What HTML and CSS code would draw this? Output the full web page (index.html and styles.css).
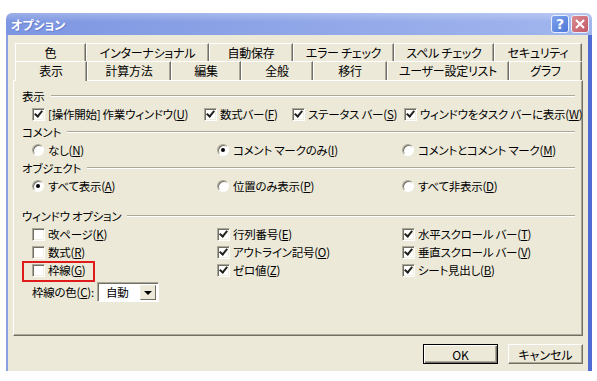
FILE: index.html
```html
<!DOCTYPE html>
<html lang="ja">
<head>
  <meta charset="UTF-8" />
  <title>オプション</title>
  <link rel="stylesheet" href="styles.css">
</head>
<body>
  <div class="dialog">
    <div class="titlebar">
      <span class="title">オプション</span>
      <div class="title-buttons">
        <span class="tbtn help">?</span>
        <span class="tbtn close">
          <svg width="10" height="10" viewBox="0 0 10 10"><path d="M1 1 L9 9 M9 1 L1 9" stroke="#fff" stroke-width="2" /></svg>
        </span>
      </div>
    </div>

    <div class="client">
      <div class="tabs">
        <div class="tab-row back">
          <div class="tab">色</div>
          <div class="tab">インターナショナル</div>
          <div class="tab">自動保存</div>
          <div class="tab">エラー チェック</div>
          <div class="tab">スペル チェック</div>
          <div class="tab">セキュリティ</div>
        </div>
        <div class="tab-row front">
          <div class="tab active">表示</div>
          <div class="tab">計算方法</div>
          <div class="tab">編集</div>
          <div class="tab">全般</div>
          <div class="tab">移行</div>
          <div class="tab">ユーザー設定リスト</div>
          <div class="tab">グラフ</div>
        </div>
      </div>

      <div class="panel">
        <div class="group-head first"><span>表示</span><i></i></div>
        <div class="row row-show">
          <label class="opt"><span class="box on"></span>[操作開始] 作業ウィンドウ(<u>U</u>)</label>
          <label class="opt"><span class="box on"></span>数式バー(<u>F</u>)</label>
          <label class="opt"><span class="box on"></span>ステータス バー(<u>S</u>)</label>
          <label class="opt"><span class="box on"></span>ウィンドウをタスク バーに表示(<u>W</u>)</label>
        </div>

        <div class="group-head"><span>コメント</span><i></i></div>
        <div class="row cols">
          <label class="opt"><span class="radio"></span>なし(<u>N</u>)</label>
          <label class="opt"><span class="radio on"></span>コメント マークのみ(<u>I</u>)</label>
          <label class="opt"><span class="radio"></span>コメントとコメント マーク(<u>M</u>)</label>
        </div>

        <div class="group-head"><span>オブジェクト</span><i></i></div>
        <div class="row cols">
          <label class="opt"><span class="radio on"></span>すべて表示(<u>A</u>)</label>
          <label class="opt"><span class="radio"></span>位置のみ表示(<u>P</u>)</label>
          <label class="opt"><span class="radio"></span>すべて非表示(<u>D</u>)</label>
        </div>

        <div class="group-head window"><span>ウィンドウ オプション</span><i></i></div>
        <div class="row cols">
          <label class="opt"><span class="box"></span>改ページ(<u>K</u>)</label>
          <label class="opt"><span class="box on"></span>行列番号(<u>E</u>)</label>
          <label class="opt"><span class="box on"></span>水平スクロール バー(<u>T</u>)</label>
        </div>
        <div class="row cols">
          <label class="opt"><span class="box"></span>数式(<u>R</u>)</label>
          <label class="opt"><span class="box on"></span>アウトライン記号(<u>O</u>)</label>
          <label class="opt"><span class="box on"></span>垂直スクロール バー(<u>V</u>)</label>
        </div>
        <div class="row cols">
          <label class="opt marked"><span class="box"></span>枠線(<u>G</u>)</label>
          <label class="opt"><span class="box on"></span>ゼロ値(<u>Z</u>)</label>
          <label class="opt"><span class="box on"></span>シート見出し(<u>B</u>)</label>
        </div>

        <div class="row color-row">
          <span>枠線の色(<u>C</u>):</span>
          <div class="select">
            <span class="select-value">自動</span>
            <span class="select-arrow"></span>
          </div>
        </div>
      </div>

      <div class="actions">
        <button class="btn default">OK</button>
        <button class="btn">キャンセル</button>
      </div>
    </div>
  </div>
</body>
</html>
```

FILE: styles.css
```css
:root {
  --face: #ece9d8;
  --light: #ffffff;
  --shadow: #aca899;
  --dark: #716f64;
  --frame: #8ba0e2;
  --frame-dark: #4f6cd4;
}

body {
  margin: 0;
  background: #fff;
  font-family: "Noto Sans CJK JP", sans-serif;
  font-feature-settings: "palt";
  font-size: 11.5px;
  letter-spacing: -0.25px;
  color: #000;
}

.dialog {
  margin: 13px 0 0 6px;
  width: 586px;
  height: 358px;
  display: flex;
  flex-direction: column;
}

/* title bar */
.titlebar {
  height: 22px;
  flex: none;
  display: flex;
  align-items: center;
  padding: 0 3px 0 5px;
  border-radius: 6px 6px 0 0;
  background:
    linear-gradient(to bottom, rgba(255,255,255,0.25), rgba(255,255,255,0) 40%),
    linear-gradient(to right, #7d96e1, #a2b6ee);
}

.title {
  color: #fff;
  font-weight: bold;
  font-size: 12px;
  letter-spacing: 0;
  text-shadow: 1px 1px 0 #6b82cf;
}

.title-buttons {
  margin-left: auto;
  display: flex;
  gap: 2px;
}

.tbtn {
  width: 18px;
  height: 18px;
  box-sizing: border-box;
  border: 1px solid #e8eefc;
  border-radius: 3px;
  display: flex;
  align-items: center;
  justify-content: center;
  color: #fff;
}

.help {
  background: linear-gradient(135deg, #7ea2ec, #4c78d8);
  font: bold 14px "DejaVu Sans", sans-serif;
}

.close {
  background: linear-gradient(135deg, #dc8a92, #c25a68);
}

/* window body */
.client {
  flex: 1;
  display: flex;
  flex-direction: column;
  background: var(--face);
  border-left: 2px solid var(--frame);
  border-right: 4px solid var(--frame-dark);
  padding: 8px 5px 7px 5px;
}

/* tabs */
.tabs {
  margin: 0 1px 0 2px;
}

.tab-row {
  display: grid;
  height: 18px;
}

.tab-row.back {
  grid-template-columns: 71px 123px 84px 101px 100px 88px;
}

.tab-row.front {
  grid-template-columns: 72px 84px 70px 72px 74px 122px 73px;
  height: 19px;
}

.tab {
  box-sizing: border-box;
  border-top: 1px solid var(--light);
  border-left: 1px solid var(--light);
  border-right: 1px solid var(--dark);
  box-shadow: inset -1px 0 0 var(--shadow);
  text-align: center;
  line-height: 17px;
  font-size: 12px;
  white-space: nowrap;
}

.tab.active {
  position: relative;
  z-index: 1;
  height: 20px;
  background: var(--face);
}

/* tab page */
.panel {
  height: 256px;
  box-sizing: border-box;
  flex: none;
  border: 1px solid;
  border-color: var(--light) var(--dark) var(--dark) var(--light);
  box-shadow: inset -1px -1px 0 var(--shadow);
  padding: 6px 8px 0 8px;
}

.group-head {
  display: flex;
  align-items: center;
  height: 18px;
}

.group-head.window {
  margin-top: 12px;
}

.group-head i {
  flex: 1;
  margin-left: 6px;
  margin-right: -1px;
  height: 1px;
  background: var(--shadow);
  border-bottom: 1px solid var(--light);
}

.row {
  height: 18px;
  padding-left: 10px;
  display: grid;
  align-items: center;
}

.row-show {
  grid-template-columns: 172px 88px 112px auto;
}

.cols {
  grid-template-columns: 185px 185px auto;
}

.opt {
  display: flex;
  align-items: center;
  white-space: nowrap;
  position: relative;
}

.box {
  width: 13px;
  height: 13px;
  box-sizing: border-box;
  margin-right: 3px;
  flex: none;
  position: relative;
  background: #fff;
  border: 1px solid;
  border-color: var(--shadow) var(--light) var(--light) var(--shadow);
  box-shadow: inset 1px 1px 0 var(--dark), inset -1px -1px 0 #f1efe2;
}

.box.on::after {
  content: "";
  position: absolute;
  left: 3px;
  top: 0px;
  width: 3px;
  height: 6px;
  border-right: 2px solid #21211c;
  border-bottom: 2px solid #21211c;
  transform: rotate(40deg);
}

.radio {
  width: 12px;
  height: 12px;
  box-sizing: border-box;
  margin-right: 4px;
  flex: none;
  border-radius: 50%;
  background: #fff;
  border: 1px solid;
  border-color: var(--shadow) var(--light) var(--light) var(--shadow);
  box-shadow: inset 1px 1px 0 var(--dark);
  position: relative;
}

.radio.on::after {
  content: "";
  position: absolute;
  left: 3px;
  top: 3px;
  width: 4px;
  height: 4px;
  border-radius: 50%;
  background: #000;
}

/* red highlight around the gridlines option */
.marked::before {
  content: "";
  position: absolute;
  left: -10px;
  top: -1px;
  width: 73px;
  height: 21px;
  box-sizing: border-box;
  border: 2px solid #e01b1b;
}

.color-row {
  display: flex;
  align-items: center;
  margin-top: 3px;
  height: 20px;
  gap: 3px;
}

.select {
  width: 62px;
  height: 20px;
  box-sizing: border-box;
  display: flex;
  align-items: center;
  background: #fff;
  border: 1px solid;
  border-color: var(--shadow) var(--light) var(--light) var(--shadow);
  box-shadow: inset 1px 1px 0 var(--dark);
  padding: 2px 2px 2px 8px;
}

.select-value {
  flex: 1;
}

.select-arrow {
  width: 16px;
  height: 15px;
  box-sizing: border-box;
  background: var(--face);
  border: 1px solid;
  border-color: #f1efe2 var(--dark) var(--dark) #f1efe2;
  position: relative;
}

.select-arrow::after {
  content: "";
  position: absolute;
  left: 3px;
  top: 5px;
  border-left: 4px solid transparent;
  border-right: 4px solid transparent;
  border-top: 4px solid #000;
}

/* dialog buttons */
.actions {
  margin-top: auto;
  display: flex;
  justify-content: flex-end;
  gap: 10px;
}

.btn {
  width: 75px;
  height: 20px;
  padding: 0;
  font-family: "Noto Sans CJK JP", sans-serif;
  font-feature-settings: "palt";
  font-size: 12px;
  color: #000;
  background: var(--face);
  border: 1px solid;
  border-color: var(--light) var(--dark) var(--dark) var(--light);
  box-shadow: inset -1px -1px 0 var(--shadow);
}

.btn.default {
  border-color: #000;
  box-shadow: inset 1px 1px 0 var(--light), inset -1px -1px 0 var(--dark), inset -2px -2px 0 var(--shadow);
}
```
